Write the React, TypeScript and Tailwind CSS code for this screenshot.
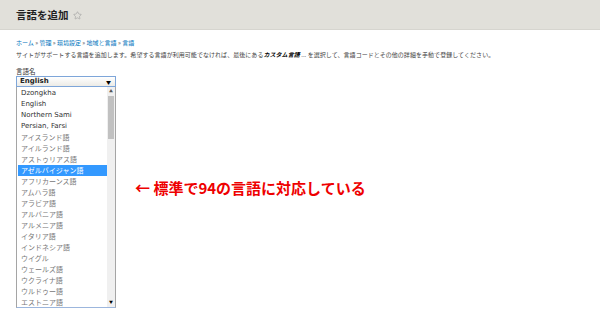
import { Star } from "lucide-react"

const languages = [
  { name: "Dzongkha", en: true },
  { name: "English", en: true },
  { name: "Northern Sami", en: true },
  { name: "Persian, Farsi", en: true },
  { name: "アイスランド語" },
  { name: "アイルランド語" },
  { name: "アストゥリアス語" },
  { name: "アゼルバイジャン語", selected: true },
  { name: "アフリカーンス語" },
  { name: "アムハラ語" },
  { name: "アラビア語" },
  { name: "アルバニア語" },
  { name: "アルメニア語" },
  { name: "イタリア語" },
  { name: "インドネシア語" },
  { name: "ウイグル" },
  { name: "ウェールズ語" },
  { name: "ウクライナ語" },
  { name: "ウルドゥー語" },
  { name: "エストニア語" },
]

const jp = "font-['Noto_Sans_CJK_JP','Noto_Sans',sans-serif]"

function LanguageDropdown() {
  return (
    <div className="w-[100px]">
      <div className="flex h-[11px] items-center justify-between border border-[#7ea6d9] bg-gradient-to-b from-white to-[#ecebe6] pl-[3px] pr-[4px]">
        <span className="font-['DejaVu_Sans',sans-serif] text-[7px] font-bold leading-none text-[#222]">English</span>
        <span className="text-[5px] leading-none text-black">▼</span>
      </div>
      <div className="flex h-[221px] border-x border-b border-x-[#a5a5a5] border-b-[#9cb6dd]">
        <ul className="flex-1 pt-px pl-px">
          {languages.map(lang => (
            <li
              key={lang.name}
              className={
                "flex h-[11px] items-center pl-[3px] leading-none " +
                (lang.selected
                  ? `bg-[#3399ff] text-white text-[7px] ${jp}`
                  : lang.en
                  ? "font-['DejaVu_Sans',sans-serif] text-[7px] text-[#333]"
                  : `text-[7px] text-[#777] ${jp}`)
              }
            >
              {lang.name}
            </li>
          ))}
        </ul>
        <div className="flex w-[8px] flex-col items-center bg-[#f0f0f0]">
          <span className="mt-[2px] text-[4px] leading-none text-[#555]">▲</span>
          <div className="mt-[3px] h-[43px] w-[6px] bg-[#c1c1c1]" />
          <span className="mt-auto mb-[3px] text-[4px] leading-none text-black">▼</span>
        </div>
      </div>
    </div>
  )
}

export default function App() {
  return (
    <div className={`h-[322px] w-[600px] overflow-hidden bg-white ${jp}`}>
      <div className="flex h-[30px] items-center gap-[4px] border-b border-[#d6d5cf] bg-[#e1e0da] px-4 pt-[2px]">
        <h1 className="text-[10.5px] font-bold leading-none text-[#222]">言語を追加</h1>
        <Star className="h-[9px] w-[9px] text-[#999]" strokeWidth={1.5} />
      </div>

      <div className="px-4 pt-[8px]">
        <p className="h-[10px] text-[6px] leading-[10px] text-[#0074bd]">
          ホーム <span className="text-[#555]">»</span> 管理 <span className="text-[#555]">»</span> 環境設定{" "}
          <span className="text-[#555]">»</span> 地域と言語 <span className="text-[#555]">»</span> 言語
        </p>
        <p className="mt-[2px] h-[10px] text-[6px] tracking-[0.05px] leading-[10px] text-[#444]">
          サイトがサポートする言語を追加します。希望する言語が利用可能でなければ、最後にある
          <em className="font-bold text-black">カスタム言語</em> ... を選択して、言語コードとその他の詳細を手動で登録してください。
        </p>
        <label className="mt-[6px] block h-[10px] text-[6.5px] leading-[10px] text-[#333]">言語名</label>

        <div className="flex">
          <LanguageDropdown />
          <div className="ml-[19px] pt-[102px] text-[15px] font-bold leading-[20px] text-[#ee0000]">
            ← 標準で94の言語に対応している
          </div>
        </div>
      </div>
    </div>
  )
}
